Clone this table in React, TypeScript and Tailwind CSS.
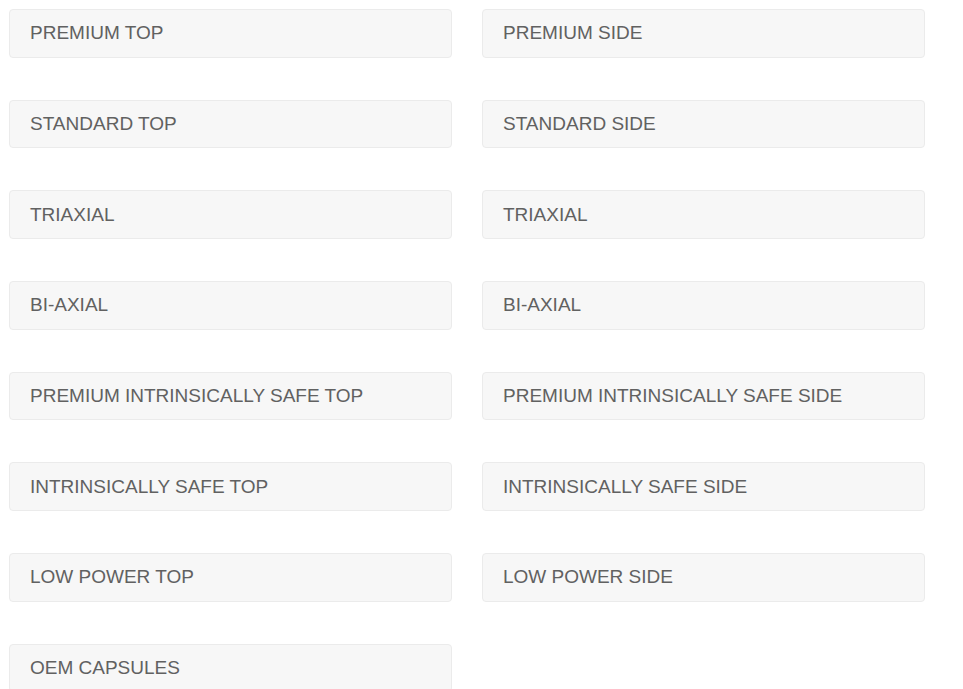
import React from "react";

const rows: [string, string | null][] = [
  ["PREMIUM TOP", "PREMIUM SIDE"],
  ["STANDARD TOP", "STANDARD SIDE"],
  ["TRIAXIAL", "TRIAXIAL"],
  ["BI-AXIAL", "BI-AXIAL"],
  ["PREMIUM INTRINSICALLY SAFE TOP", "PREMIUM INTRINSICALLY SAFE SIDE"],
  ["INTRINSICALLY SAFE TOP", "INTRINSICALLY SAFE SIDE"],
  ["LOW POWER TOP", "LOW POWER SIDE"],
  ["OEM CAPSULES", null],
];

function Box({ label }: { label: string }) {
  return (
    <div className="h-[48.5px] rounded-[4px] border border-[#ebebeb] bg-[#f7f7f7] px-[20px] pt-[13.2px] text-[19px] leading-[20px] text-[#616161]">
      {label}
    </div>
  );
}

export default function App() {
  return (
    <div
      className="h-[689px] overflow-hidden bg-white pl-[9px] pt-[9px]"
      style={{ fontFamily: '"Liberation Sans", Arial, sans-serif' }}
    >
      <div className="grid w-[916px] grid-cols-2 gap-x-[30px] gap-y-[42.2px]">
        {rows.map(([a, b], i) => (
          <React.Fragment key={i}>
            <Box label={a} />
            {b ? <Box label={b} /> : <div />}
          </React.Fragment>
        ))}
      </div>
    </div>
  );
}
